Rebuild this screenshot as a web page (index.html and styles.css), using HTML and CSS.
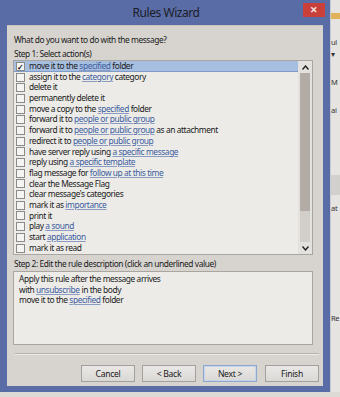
FILE: index.html
```html
<!DOCTYPE html>
<html lang="en">
<head>
    <meta charset="UTF-8">
    <title>Rules Wizard</title>
    <link rel="stylesheet" href="styles.css">
</head>
<body>
    <div class="screen">
        <div class="window">
            <div class="titlebar">
                <span></span>
                <span class="title">Rules Wizard</span>
                <span class="close-wrap"><span class="close">&#x2715;</span></span>
            </div>
            <div class="client">
                <p class="prompt">What do you want to do with the message?</p>
                <p class="step">Step 1: Select action(s)</p>
                <div class="listbox">
                    <ul class="actions">
                        <li class="selected"><span class="box">&#x2713;</span><span>move it to the <a>specified</a> folder</span></li>
                        <li><span class="box"></span><span>assign it to the <a>category</a> category</span></li>
                        <li><span class="box"></span><span>delete it</span></li>
                        <li><span class="box"></span><span>permanently delete it</span></li>
                        <li><span class="box"></span><span>move a copy to the <a>specified</a> folder</span></li>
                        <li><span class="box"></span><span>forward it to <a>people or public group</a></span></li>
                        <li><span class="box"></span><span>forward it to <a>people or public group</a> as an attachment</span></li>
                        <li><span class="box"></span><span>redirect it to <a>people or public group</a></span></li>
                        <li><span class="box"></span><span>have server reply using <a>a specific message</a></span></li>
                        <li><span class="box"></span><span>reply using <a>a specific template</a></span></li>
                        <li><span class="box"></span><span>flag message for <a>follow up at this time</a></span></li>
                        <li><span class="box"></span><span>clear the Message Flag</span></li>
                        <li><span class="box"></span><span>clear message's categories</span></li>
                        <li><span class="box"></span><span>mark it as <a>importance</a></span></li>
                        <li><span class="box"></span><span>print it</span></li>
                        <li><span class="box"></span><span>play <a>a sound</a></span></li>
                        <li><span class="box"></span><span>start <a>application</a></span></li>
                        <li><span class="box"></span><span>mark it as read</span></li>
                    </ul>
                    <div class="scrollbar">
                        <span class="arrow">
                            <svg width="7" height="5" viewBox="0 0 7 5"><path d="M0.5 4.5 L3.5 1 L6.5 4.5" fill="none" stroke="#222" stroke-width="1.4"/></svg>
                        </span>
                        <span class="thumb"></span>
                        <span class="track"></span>
                        <span class="arrow">
                            <svg width="7" height="5" viewBox="0 0 7 5"><path d="M0.5 0.5 L3.5 4 L6.5 0.5" fill="none" stroke="#222" stroke-width="1.4"/></svg>
                        </span>
                    </div>
                </div>
                <p class="step step-two">Step 2: Edit the rule description (click an underlined value)</p>
                <div class="desc">
                    <p>Apply this rule after the message arrives</p>
                    <p>with <a>unsubscribe</a> in the body</p>
                    <p>move it to the <a>specified</a> folder</p>
                </div>
                <div class="sep"></div>
                <div class="buttons">
                    <button class="btn">Cancel</button>
                    <button class="btn">&lt; Back</button>
                    <button class="btn default">Next &gt;</button>
                    <button class="btn finish">Finish</button>
                </div>
            </div>
        </div>
        <div class="behind">
            <span class="tab"></span>
            <span class="frag">ul</span>
            <span class="frag small">&#x25BE;</span>
            <span class="frag">M</span>
            <span class="frag">ai</span>
            <span class="band"></span>
            <span class="frag low">at</span>
            <span class="frag lower">Re</span>
        </div>
    </div>
</body>
</html>
```

FILE: styles.css
```css
:root {
    --frame-blue: #5a6ca6;
    --client-gray: #d7d4d0;
    --field-bg: #ecebe8;
    --text-color: #1a1a1a;
    --link-color: #3d5d9e;
    --border-gray: #a9a6a2;
}
html, body {
    margin: 0;
    padding: 0;
}
body {
    width: 340px;
    height: 397px;
    overflow: hidden;
    background-color: #dddad6;
    font-family: "Noto Sans", "Open Sans", sans-serif;
    font-size: 8.4px;
    letter-spacing: -0.42px;
    color: var(--text-color);
}
p {
    margin: 0;
}
.screen {
    display: flex;
    height: 392px;
}
.window {
    width: 330px;
    flex: none;
    background-color: var(--frame-blue);
    display: flex;
    flex-direction: column;
    padding: 0 7px 6px 7px;
    box-sizing: border-box;
}
.titlebar {
    height: 25px;
    flex: none;
    display: grid;
    grid-template-columns: 1fr auto 1fr;
    margin: 0 -7px;
}
.title {
    font-size: 12px;
    letter-spacing: -0.45px;
    line-height: 25px;
    color: #1b1d28;
    padding-left: 2px;
}
.close-wrap {
    display: flex;
    justify-content: flex-end;
    padding-right: 5px;
}
.close {
    width: 22px;
    height: 14px;
    margin-top: 3px;
    background-color: #c9403a;
    color: #f4e8e6;
    font-size: 9px;
    letter-spacing: 0;
    line-height: 14px;
    text-align: center;
    font-weight: 700;
}
.client {
    flex: 1;
    background-color: var(--client-gray);
    padding: 7px 10px 0 6px;
    display: flex;
    flex-direction: column;
    border-top: 1px solid #c9c6c2;
}
.prompt, .step {
    line-height: 13px;
    padding-left: 1px;
}
.step {
    margin-top: 1px;
}
.listbox {
    display: flex;
    height: 195px;
    box-sizing: border-box;
    border: 1px solid var(--border-gray);
    background-color: var(--field-bg);
}
.actions {
    list-style: none;
    margin: 0;
    padding: 0;
    flex: 1;
}
.actions li {
    height: 10.7px;
    line-height: 10.7px;
    display: flex;
    align-items: center;
    white-space: nowrap;
    padding-left: 2px;
}
.actions li.selected {
    background-color: #a6bedf;
    box-shadow: inset 0 -1px 0 #7f9cc8;
}
.box {
    width: 7px;
    height: 7px;
    border: 1px solid #8c8a88;
    background-color: #f4f4f2;
    margin-right: 4px;
    flex: none;
    font-size: 8px;
    line-height: 7px;
    text-align: center;
    font-weight: 700;
    letter-spacing: 0;
    color: #111;
}
a {
    color: var(--link-color);
    text-decoration: underline;
    text-decoration-color: #8a9cc2;
}
.scrollbar {
    width: 14px;
    flex: none;
    display: flex;
    flex-direction: column;
    background-color: #e4e2df;
}
.arrow {
    height: 12px;
    flex: none;
    display: flex;
    align-items: center;
    justify-content: center;
}
.thumb {
    height: 138px;
    margin: 0 2px;
    background-color: #b3aca6;
}
.track {
    flex: 1;
    margin: 0 2px;
    background-color: #d2ceca;
}
.step-two {
    margin-top: 2px;
    margin-bottom: 1px;
}
.desc {
    height: 74px;
    box-sizing: border-box;
    border: 1px solid var(--border-gray);
    background-color: var(--field-bg);
    padding: 2px 5px;
}
.desc p {
    line-height: 10.5px;
}
.sep {
    height: 0;
    border-top: 1px solid #b5b2ae;
    border-bottom: 1px solid #eeece9;
    margin: 8px -6px 0 2px;
}
.buttons {
    display: flex;
    justify-content: flex-end;
    gap: 7px;
    margin-top: 10px;
    margin-right: -6px;
}
.btn {
    width: 54px;
    height: 17px;
    padding: 0;
    font-family: inherit;
    font-size: 8.6px;
    letter-spacing: -0.3px;
    color: var(--text-color);
    border: 1px solid #a3a19e;
    background: linear-gradient(#e9e8e6, #dad8d5);
}
.btn.default {
    border-color: #8ea7cc;
    box-shadow: inset 0 0 0 1px #c5d4ea;
}
.btn.finish {
    margin-left: 1px;
}
.behind {
    flex: 1;
    background-color: #e6e4e1;
    display: flex;
    flex-direction: column;
    overflow: hidden;
    font-size: 7.5px;
    letter-spacing: -0.3px;
    color: #333;
    border-left: 1px solid #c8cbd6;
}
.tab {
    height: 6px;
    margin-top: 13px;
    background-color: #e2b25a;
}
.frag {
    margin-top: 18px;
    white-space: nowrap;
}
.frag.small {
    margin-top: 2px;
}
.band {
    height: 20px;
    margin-top: 60px;
    background-color: #d2d0cd;
}
.frag.low {
    margin-top: 8px;
}
.frag.lower {
    margin-top: 100px;
}
```
